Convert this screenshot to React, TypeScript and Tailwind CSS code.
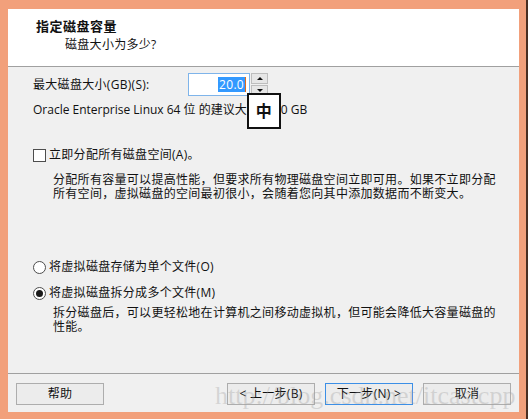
const font = { fontFamily: '"Open Sans", "Noto Sans CJK SC", sans-serif' };

function Btn({ children, focus }: { children: React.ReactNode; focus?: boolean }) {
  return (
    <div
      className={
        "w-[88px] h-[22px] flex items-center justify-center text-[12px] bg-[#ececec] border " +
        (focus ? "border-[#3c8fe6]" : "border-[#adadad]")
      }
    >
      {children}
    </div>
  );
}

function Radio({ checked }: { checked?: boolean }) {
  return (
    <div className="w-[13px] h-[13px] rounded-full border border-[#4d4d4d] bg-white flex items-center justify-center">
      {checked && <div className="w-[7px] h-[7px] rounded-full bg-[#1a1a1a]" />}
    </div>
  );
}

export default function App() {
  return (
    <div className="relative w-[528px] h-[419px] flex bg-[#f2a07b] text-[#111] tracking-[0.3px]" style={font}>
      <div className="flex-1 flex flex-col pl-[8px] pt-[9px] pr-[7px] pb-[7px]">
        <div className="h-[58px] bg-white border-b border-[#a0a0a0] pt-[10px]">
          <div className="pl-[28px] text-[13px] font-bold leading-[14px] tracking-[0.5px]">指定磁盘容量</div>
          <div className="pl-[57px] mt-[5px] text-[12px] leading-[14px]">磁盘大小为多少?</div>
        </div>

        <div className="flex-1 flex flex-col bg-[#f0f0f0]">
          <div className="flex flex-col pl-[25px] text-[12px]">
            <div className="mt-[6px] h-[23px] flex items-center">
              <div className="w-[155px] leading-[14px]">最大磁盘大小(GB)(S):</div>
              <div className="w-[62px] h-[23px] bg-white border border-[#7eb4ea] flex items-center justify-end pr-[3px]">
                <span className="bg-[#3399ff] text-white leading-[15px] px-[1px]">20.0</span>
                <span className="w-[1px] h-[15px] bg-[#e06a1a]" />
              </div>
              <div className="ml-[1px] w-[17px] h-[23px] flex flex-col gap-[1px]">
                <div className="flex-1 bg-[#e6e6e6] border border-[#bdbdbd] flex items-center justify-center">
                  <div className="w-0 h-0 border-l-[3px] border-r-[3px] border-b-[3px] border-l-transparent border-r-transparent border-b-[#111]" />
                </div>
                <div className="flex-1 bg-[#e6e6e6] border border-[#bdbdbd] flex items-center justify-center">
                  <div className="w-0 h-0 border-l-[3px] border-r-[3px] border-t-[3px] border-l-transparent border-r-transparent border-t-[#111]" />
                </div>
              </div>
            </div>
            <div className="mt-[7px] leading-[14px] whitespace-nowrap tracking-normal">
              Oracle Enterprise Linux 64 位 的建议大小为 40 GB
            </div>

            <div className="mt-[31px] h-[14px] flex items-center gap-[3px]">
              <div className="w-[13px] h-[13px] border border-[#4d4d4d] bg-white" />
              <span className="leading-[14px]">立即分配所有磁盘空间(A)。</span>
            </div>
            <div className="mt-[11px] pl-[20px] leading-[14px] whitespace-nowrap">
              分配所有容量可以提高性能，但要求所有物理磁盘空间立即可用。如果不立即分配
              <br />
              所有空间，虚拟磁盘的空间最初很小，会随着您向其中添加数据而不断变大。
            </div>

            <div className="mt-[59px] h-[14px] flex items-center gap-[3px]">
              <Radio />
              <span className="leading-[14px]">将虚拟磁盘存储为单个文件(O)</span>
            </div>
            <div className="mt-[12px] h-[14px] flex items-center gap-[3px]">
              <Radio checked />
              <span className="leading-[14px]">将虚拟磁盘拆分成多个文件(M)</span>
            </div>
            <div className="mt-[6px] pl-[20px] leading-[14px] whitespace-nowrap">
              拆分磁盘后，可以更轻松地在计算机之间移动虚拟机，但可能会降低大容量磁盘的
              <br />
              性能。
            </div>
          </div>

          <div className="mt-auto border-t border-[#a0a0a0] pt-[9px] pb-[7px] px-[8px] flex justify-between">
            <Btn>帮助</Btn>
            <div className="flex gap-[10px]">
              <Btn>&lt; 上一步(B)</Btn>
              <Btn focus>下一步(N) &gt;</Btn>
              <Btn>取消</Btn>
            </div>
          </div>
        </div>
      </div>
      <div className="w-[2px] bg-[#4a2f22]" />

      <div className="absolute left-[247px] top-[93px] w-[34px] h-[36px] border-2 border-[#111] bg-white flex items-center justify-center text-[16px] font-bold">
        中
      </div>

      <div
        className="absolute left-[215px] top-[383px] text-[26px] leading-none text-[#a0a0a0]/35 tracking-normal whitespace-nowrap"
        style={{ fontFamily: '"Liberation Serif", serif' }}
      >
        http://blog.csdn.net/itcastcpp
      </div>
    </div>
  );
}
